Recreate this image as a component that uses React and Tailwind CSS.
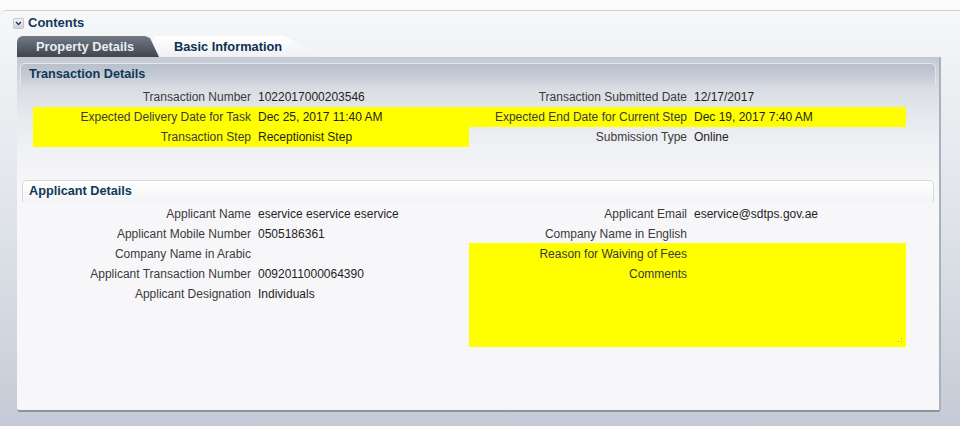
import React from "react";

const font = "font-['Liberation_Sans',Arial,sans-serif]";

const Row = ({ label, value, hl }) => (
  <div
    className={`grid grid-cols-[218px_1fr] gap-x-[7px] h-5 items-center ${
      hl ? "bg-[#ffff00]" : ""
    }`}
  >
    <span className="text-right text-[#3a3a3a] whitespace-nowrap">{label}</span>
    <span className="text-[#1e1e1e] whitespace-nowrap">{value}</span>
  </div>
);

const ResizeGrip = () => (
  <svg width="8" height="8" viewBox="0 0 8 8" className="absolute right-[3px] bottom-[3px]">
    <rect x="6" y="2" width="1" height="1" fill="#b5b56a" />
    <rect x="6" y="5" width="1" height="1" fill="#b5b56a" />
    <rect x="3" y="5" width="1" height="1" fill="#b5b56a" />
  </svg>
);

export default function App() {
  return (
    <div className={`w-[960px] h-[426px] overflow-hidden bg-[#fbfbfc] pt-[10px] text-[12px] ${font}`}>
      <div className="h-[416px] flex flex-col border-t border-[#cdd2da] rounded-tl-[6px] bg-[linear-gradient(to_bottom,#f7f8fa_0%,#eef0f3_15%,#e2e6eb_45%,#d2d8e0_75%,#c4cbd6_100%)]">
        {/* Contents header */}
        <div className="h-[24px] flex items-center pl-[13px] gap-[4px]">
          <div className="w-[11px] h-[11px] rounded-[2px] bg-[linear-gradient(to_bottom,#f4f4f4,#cfd2d6)] border border-[#c2c6cc] flex items-center justify-center">
            <svg width="7" height="5" viewBox="0 0 7 5">
              <polyline points="1,1 3.5,3.5 6,1" fill="none" stroke="#26384a" strokeWidth="1.3" />
            </svg>
          </div>
          <span className="text-[13px] font-bold text-[#14385a]">Contents</span>
        </div>

        {/* Tabs */}
        <div className="relative h-[21px] mt-[1px] ml-[17px]">
          <div className="absolute left-[136px] top-0 w-[166px] h-[21px] rounded-tl-[5px] bg-[linear-gradient(to_bottom,#ffffff,#eef0f3)] [clip-path:polygon(0_0,130px_0,136px_2px,166px_21px,0_21px)] flex items-center pl-[21px]">
            <span className="text-[12.8px] font-bold text-[#0e2f4e]">Basic Information</span>
          </div>
          <div className="absolute left-0 top-0 w-[142px] h-[21px] rounded-tl-[6px] bg-[linear-gradient(to_bottom,#727a84,#3d4650)] [clip-path:polygon(0_0,128px_0,133px_2px,142px_21px,0_21px)] flex items-center pl-[19px]">
            <span className="text-[12.8px] font-bold text-[#e9edf1]">Property Details</span>
          </div>
        </div>

        {/* Panel */}
        <div className="ml-[17px] w-[924px] h-[355px] flex flex-col rounded-b-[3px] border-r-2 border-r-[#aab1bc] border-b-2 border-b-[#8d949f] bg-[linear-gradient(to_bottom,#c3c9d3_0px,#d9dde3_30px,#e6e9ed_60px,#f0f1f4_90px,#f7f7f9_130px)] px-[3px] pt-[6px]">
          {/* Transaction header */}
          <div className="h-[23px] flex items-center pl-[8px] rounded-t-[5px] border-t border-x border-[#e3e6eb] bg-[linear-gradient(to_bottom,#b9c0cc,#c4cad4_50%,#d4d8df)]">
            <span className="text-[12.7px] font-bold text-[#0f3858]">Transaction Details</span>
          </div>
          <div className="flex pl-[13px] pt-[1px]">
            <div className="w-[436px]">
              <Row label="Transaction Number" value="1022017000203546" />
              <Row label="Expected Delivery Date for Task" value="Dec 25, 2017 11:40 AM" hl />
              <Row label="Transaction Step" value="Receptionist Step" hl />
            </div>
            <div className="w-[437px]">
              <Row label="Transaction Submitted Date" value="12/17/2017" />
              <Row label="Expected End Date for Current Step" value="Dec 19, 2017 7:40 AM" hl />
              <Row label="Submission Type" value="Online" />
            </div>
          </div>

          {/* Applicant section */}
          <div className="mt-[33px] mx-[2px] h-[22px] flex items-center pl-[6px] rounded-t-[5px] border-t border-x border-[#d6dae0] bg-[linear-gradient(to_bottom,#ffffff,#f3f4f6)]">
            <span className="text-[12.7px] font-bold text-[#0f3858]">Applicant Details</span>
          </div>
          <div className="flex pl-[13px] pt-[2px]">
            <div className="w-[436px]">
              <Row label="Applicant Name" value="eservice eservice eservice" />
              <Row label="Applicant Mobile Number" value="0505186361" />
              <Row label="Company Name in Arabic" value="" />
              <Row label="Applicant Transaction Number" value="0092011000064390" />
              <Row label="Applicant Designation" value="Individuals" />
            </div>
            <div className="w-[437px]">
              <Row label="Applicant Email" value="eservice@sdtps.gov.ae" />
              <Row label="Company Name in English" value="" />
              <div className="relative -mt-[1px] pt-[1px] h-[104px] bg-[#ffff00]">
                <Row label="Reason for Waiving of Fees" value="" />
                <Row label="Comments" value="" />
                <ResizeGrip />
              </div>
            </div>
          </div>
        </div>
      </div>
    </div>
  );
}
